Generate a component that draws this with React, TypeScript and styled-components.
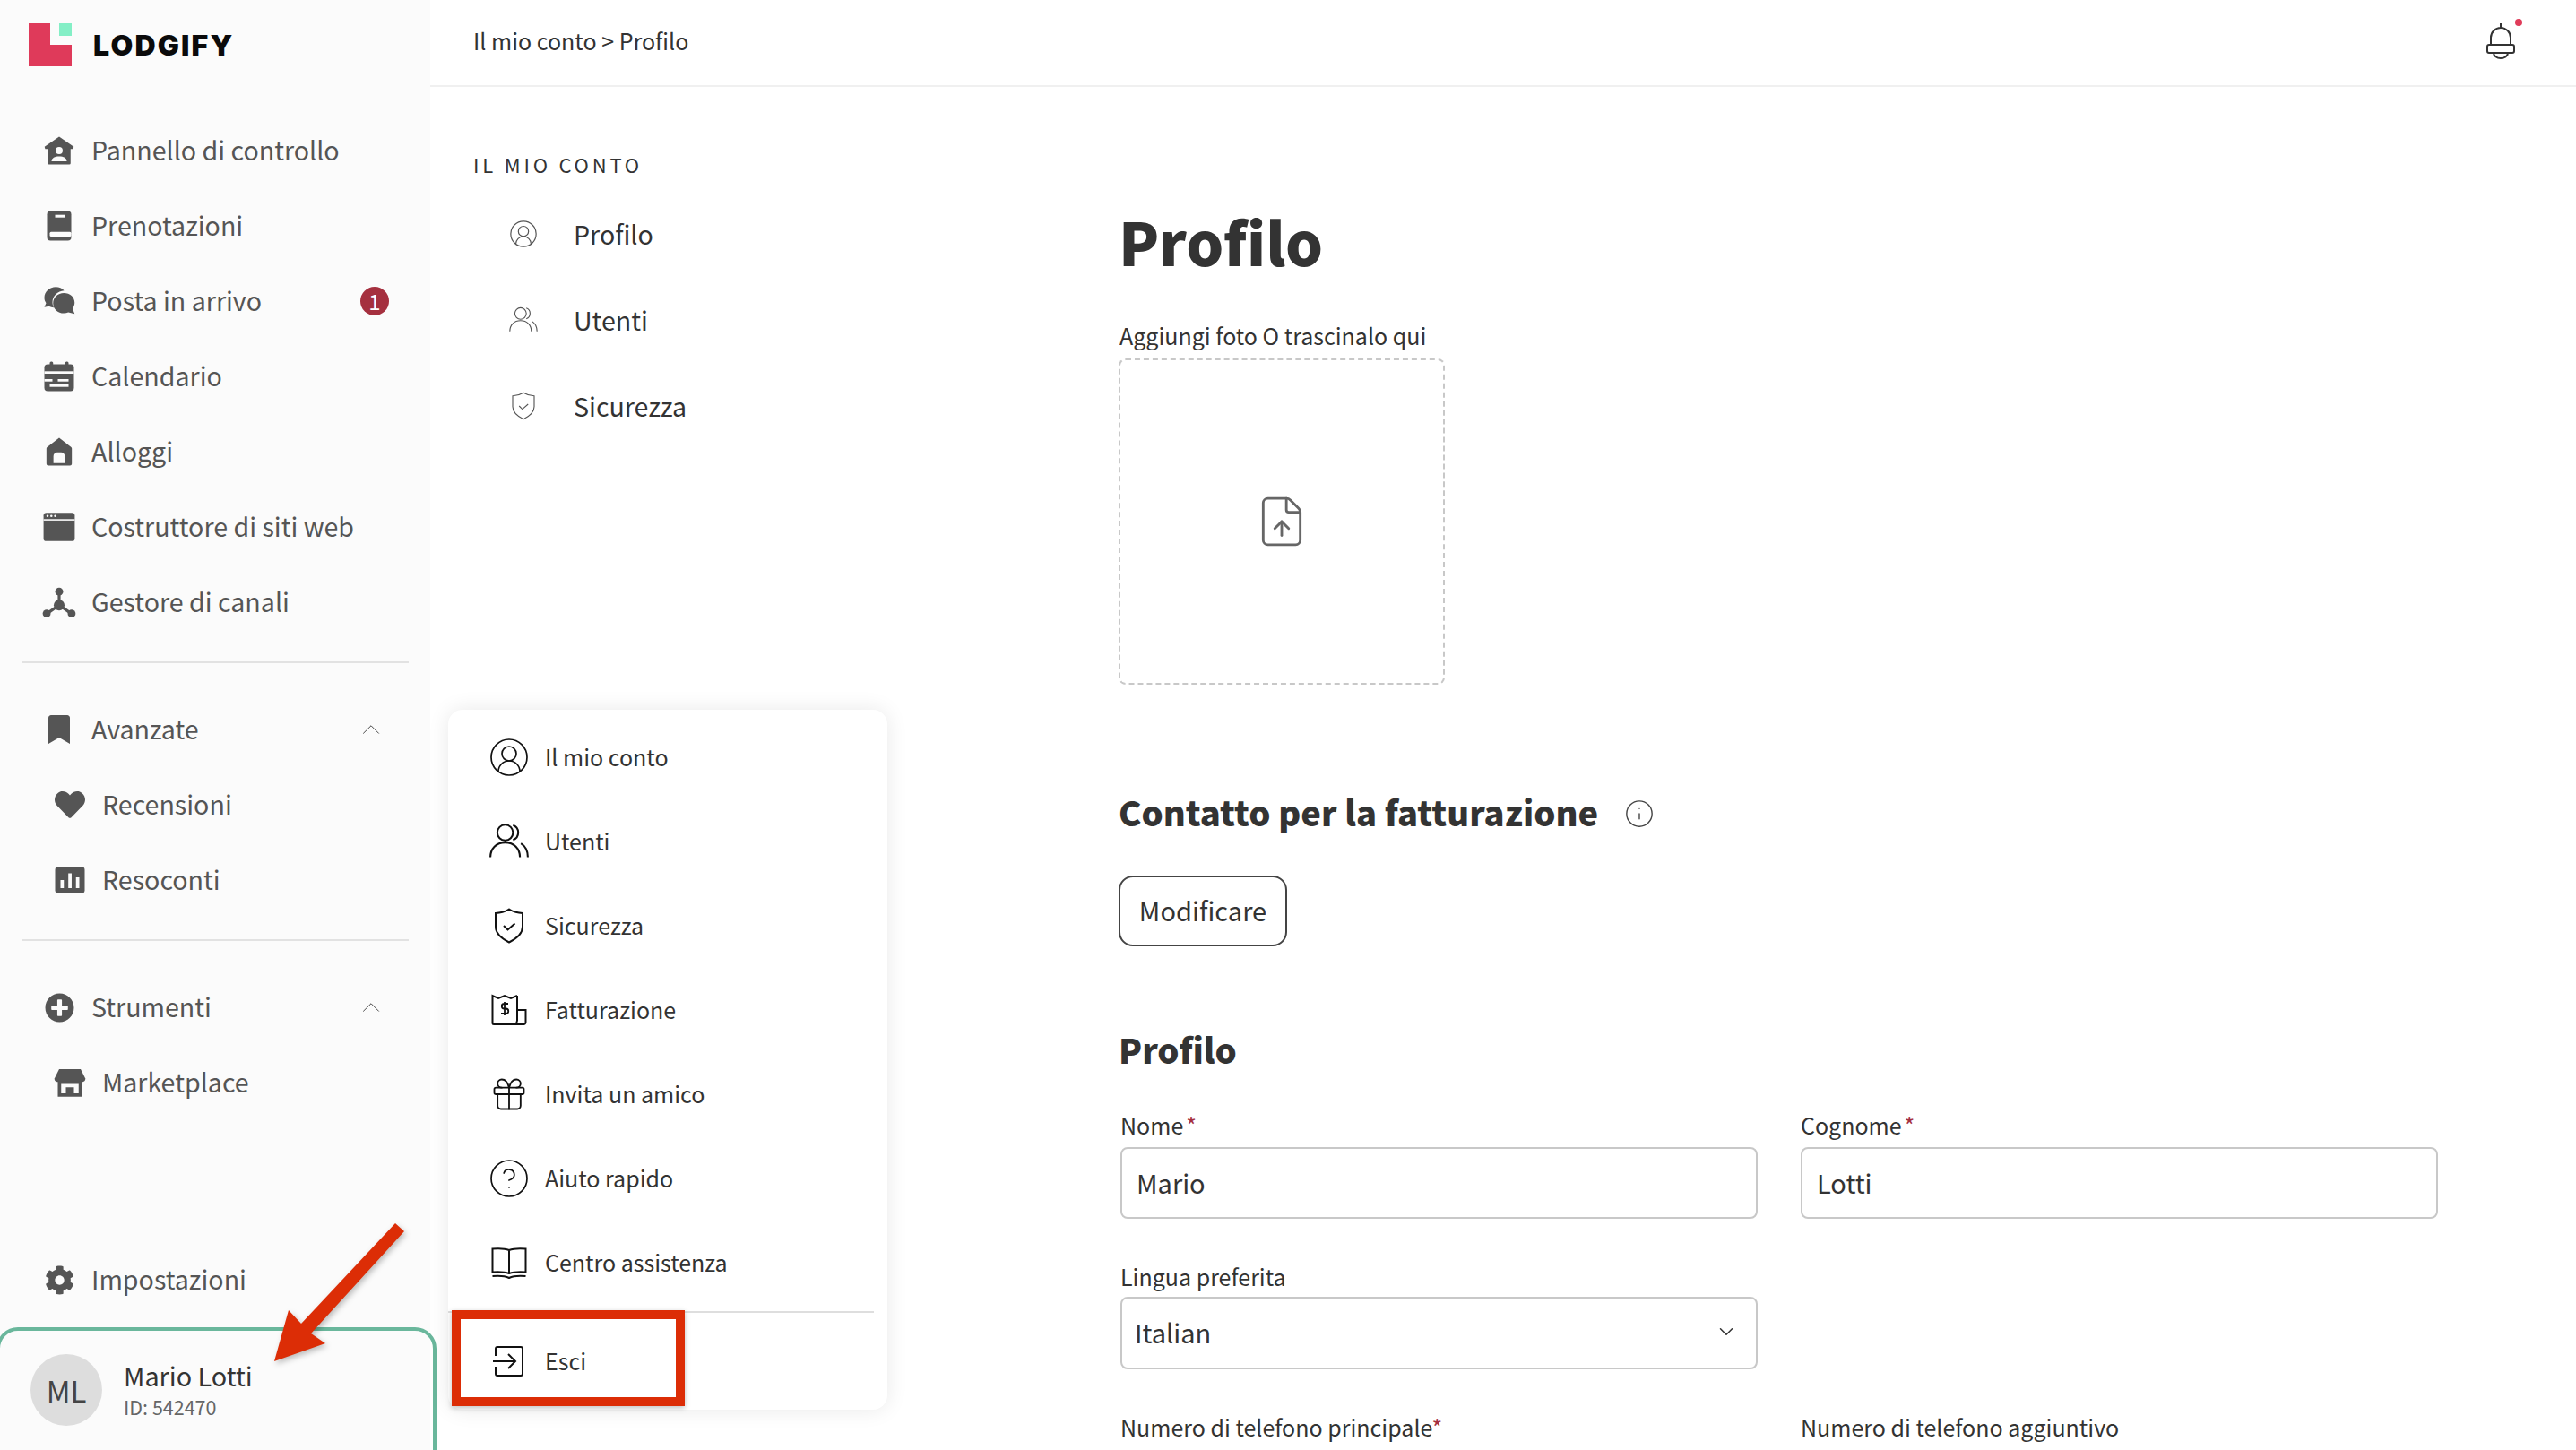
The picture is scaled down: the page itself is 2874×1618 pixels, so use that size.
import React from "react";
import styled, { createGlobalStyle } from "styled-components";
import { FaBookmark, FaCog, FaHeart, FaPlusCircle } from "react-icons/fa";
import {
  ChevronDown,
  ChevronUp,
  CircleHelp,
  CircleUserRound,
  FileUp,
  Gift,
  Info,
} from "lucide-react";

const GlobalStyle = createGlobalStyle`
  html, body {
    margin: 0;
    background: #fff;
    font-family: "Noto Sans CJK SC", "Noto Sans", sans-serif;
    color: #333;
  }
  * {
    box-sizing: border-box;
  }
  svg {
    flex-shrink: 0;
  }
`;

const SPage = styled.div`
  position: relative;
  display: flex;
  height: 1618px;
  overflow: hidden;
`;

const SSidebar = styled.aside`
  display: flex;
  flex-direction: column;
  flex: 0 0 480px;
  height: 100%;
  background: #fbfbfb;
`;

const SBrand = styled.div`
  display: flex;
  align-items: center;
  gap: 24px;
  height: 96px;
  padding: 4px 0 0 32px;
  margin-bottom: 30px;
`;

const SLogoText = styled.span`
  font-family: Inter, sans-serif;
  font-weight: 900;
  font-size: 32px;
  letter-spacing: 2.2px;
  color: #0b0b0b;
`;

const SNavRow = styled.div<{ $sub?: boolean }>`
  display: flex;
  align-items: center;
  flex: 0 0 84px;
  height: 84px;
  padding-left: ${(p) => (p.$sub ? "60px" : "48px")};
  padding-right: 46px;
  gap: 18px;
  font-size: 28.6px;
  color: #555;
`;

const SNavIcon = styled.span`
  display: flex;
  align-items: center;
  justify-content: center;
  flex: 0 0 36px;
  width: 36px;
  height: 36px;
  color: #555;
`;

const SNavLabel = styled.span`
  flex: 1;
  padding-bottom: 3px;
`;

const SBadge = styled.span`
  display: flex;
  align-items: center;
  justify-content: center;
  width: 32px;
  height: 32px;
  border-radius: 50%;
  background: #a5303f;
  color: #fff;
  font-size: 24px;
  line-height: 1;
`;

const SChevron = styled.span`
  display: flex;
  margin-right: 3px;
  color: #444;
`;

const SDivider = styled.hr`
  flex: 0 0 2px;
  width: 432px;
  margin: 24px 0 32px 24px;
  border: 0;
  background: #e2e2e2;
`;

const SSidebarFoot = styled.div`
  margin-top: auto;
`;

const SUserCard = styled.div`
  display: flex;
  align-items: center;
  gap: 24px;
  height: 148px;
  padding: 14px 0 0 34px;
`;

const SAvatar = styled.div`
  display: flex;
  align-items: center;
  justify-content: center;
  flex: 0 0 80px;
  height: 80px;
  border-radius: 50%;
  background: #ddd;
  font-size: 33px;
  color: #444;
`;

const SUserName = styled.div`
  font-size: 28.8px;
  line-height: 36px;
  color: #333;
`;

const SUserId = styled.div`
  margin-top: 1px;
  font-size: 21.5px;
  line-height: 32px;
  color: #666;
`;

const SUserHighlight = styled.div`
  position: absolute;
  left: -4px;
  top: 1481px;
  width: 491px;
  height: 160px;
  border: 4px solid #6ab79c;
  border-radius: 24px;
`;

const SMain = styled.div`
  display: flex;
  flex-direction: column;
  flex: 1;
  min-width: 0;
`;

const STopBar = styled.header`
  display: flex;
  align-items: center;
  justify-content: space-between;
  flex: 0 0 97px;
  padding: 0 48px 6px;
  border-bottom: 2px solid #f0f0f0;
  font-size: 25px;
`;

const SBell = styled.div`
  position: relative;
  display: flex;
  margin: 2px 20px 0 0;
`;

const SBellDot = styled.span`
  position: absolute;
  top: -5px;
  right: -8px;
  width: 8px;
  height: 8px;
  border-radius: 50%;
  background: #e03c5a;
`;

const SBody = styled.div`
  display: flex;
  flex: 1;
`;

const SSubNav = styled.nav`
  flex: 0 0 769px;
  padding: 73px 0 0 48px;
`;

const SSubNavTitle = styled.div`
  height: 28px;
  margin-bottom: 15px;
  font-size: 22px;
  line-height: 26px;
  letter-spacing: 3.8px;
`;

const SSubNavRow = styled.div`
  display: flex;
  align-items: center;
  gap: 40px;
  height: 96px;
  padding-left: 40px;
  font-size: 28.6px;
  color: #333;
`;

const SSubNavIcon = styled.span`
  display: flex;
  align-items: center;
  justify-content: center;
  flex: 0 0 32px;
  min-width: 0;
  height: 32px;
  color: #555;
`;

const SSubNavLabel = styled.span`
  padding-bottom: 2px;
`;

const SContent = styled.main`
  flex: 1;
  padding-top: 129px;
`;

const SPageTitle = styled.h1`
  height: 90px;
  margin: 0 0 42px -1px;
  font-size: 66px;
  line-height: 85px;
  font-weight: 900;
`;

const SFieldLabel = styled.label<{ $low?: boolean }>`
  display: block;
  height: 36px;
  margin-top: ${(p) => (p.$low ? "2px" : "0")};
  font-size: 25px;
  line-height: 33px;
`;

const SRequired = styled.span<{ $tight?: boolean }>`
  margin-left: ${(p) => (p.$tight ? "0" : "3px")};
  color: #a5303f;
`;

const SDropZone = styled.div`
  display: flex;
  align-items: center;
  justify-content: center;
  width: 364px;
  height: 364px;
  margin: 6px 0 116px -1px;
  border: 2px dashed #c8c8c8;
  border-radius: 8px;
  color: #666;
`;

const SSectionHead = styled.div`
  display: flex;
  align-items: center;
  gap: 29px;
  height: 56px;
`;

const SSectionTitle = styled.h2`
  height: 56px;
  margin: 0 0 0 -1px;
  font-size: 38.1px;
  line-height: 52px;
  font-weight: 900;
`;

const SOutlineButton = styled.button`
  display: block;
  width: 188px;
  height: 79px;
  margin: 41px 0 89px -1px;
  padding: 0 0 3px;
  border: 2px solid #444;
  border-radius: 16px;
  background: #fff;
  font: inherit;
  font-size: 29px;
  color: #333;
`;

const SFormGrid = styled.div`
  display: grid;
  grid-template-columns: 711px 711px;
  column-gap: 48px;
  row-gap: 46px;
  margin: 38px 0 0 1px;
`;

const SFieldBox = styled.div<{ $select?: boolean }>`
  display: flex;
  align-items: center;
  justify-content: space-between;
  height: ${(p) => (p.$select ? "81px" : "80px")};
  margin-top: ${(p) => (p.$select ? "3px" : "5px")};
  padding: 0 20px 3px ${(p) => (p.$select ? "14px" : "16px")};
  border: 2px solid #c8c8c8;
  border-radius: 8px;
  font-size: 29px;
  color: #333;
`;

const SEmptyCell = styled.div``;

const SPopup = styled.div`
  position: absolute;
  left: 500px;
  top: 792px;
  width: 490px;
  height: 781px;
  padding-top: 6px;
  border-radius: 16px;
  background: #fff;
  box-shadow: 0 0 24px rgba(0, 0, 0, 0.09);
`;

const SPopupRow = styled.div`
  display: flex;
  align-items: center;
  gap: 20px;
  height: 94px;
  padding-left: 48px;
  font-size: 25px;
  color: #333;
`;

const SPopupIcon = styled.span`
  display: flex;
  align-items: center;
  justify-content: center;
  flex: 0 0 40px;
  min-width: 0;
  height: 40px;
  color: #111;
`;

const SPopupLabel = styled.span`
  padding-bottom: 2px;
`;

const SPopupDivider = styled.hr`
  height: 2px;
  margin: 7px 15px 7px 0;
  border: 0;
  background: #dedede;
`;

const SRedFrame = styled.div`
  position: absolute;
  left: 4px;
  top: 670px;
  width: 260px;
  height: 107px;
  border: 10px solid #dc2d06;
  box-shadow: 0 2px 6px rgba(0, 0, 0, 0.25);
`;

const SArrow = styled.svg`
  position: absolute;
  left: 0;
  top: 1340px;
  filter: drop-shadow(2px 3px 3px rgba(0, 0, 0, 0.25));
`;

const LogoMark = () => (
  <svg width="48" height="48" viewBox="0 0 48 48">
    <path d="M0 0H24V24H48V48H0Z" fill="#df3a5a" />
    <rect x="34" y="0" width="14" height="14" fill="#84efc6" />
  </svg>
);

const iconProps = {
  width: 34,
  height: 34,
  viewBox: "0 0 24 24",
  fill: "currentColor",
};
const BG = "#fbfbfb";

const HomeIcon = () => (
  <svg {...iconProps}>
    <path d="M12 1 23.500 9 23 10.800H21V22a1 1 0 0 1-1 1H4a1 1 0 0 1-1-1V10.800H1L.5 9Z" />
    <circle cx="12" cy="12" r="2.800" fill={BG} />
    <path d="M6 20.500c0-2.800 2.600-4 6-4s6 1.200 6 4Z" fill={BG} />
  </svg>
);

const BookIcon = () => (
  <svg {...iconProps} width="36" height="36">
    <rect x="3" y="1" width="18" height="22" rx="2.500" />
    <rect x="9" y="3.800" width="7" height="2" fill={BG} />
    <rect x="5" y="16.500" width="16" height="3.500" rx="1" fill={BG} />
  </svg>
);

const ChatIcon = () => (
  <svg {...iconProps} width="36" height="36">
    <path d="M1 9.500C1 5 4.800 1.500 9.500 1.500c2.500 0 4.700 1 6.200 2.600-4.800.3-8.700 4-8.700 8.700 0 1.500.4 2.900 1.100 4.100-1.400-.1-2.600-.4-3.700-1L1 16.500l1.300-3C1.500 12.300 1 11 1 9.500Z" />
    <path d="M15.500 6C20 6 23.500 9 23.500 13.200c0 1.700-.6 3.200-1.500 4.400l1.500 3.900-4.700-1.200c-1 .4-2.100.7-3.300.7-4.500 0-8-3.200-8-7.400S11 6 15.500 6Z" />
  </svg>
);

const CalendarIcon = () => (
  <svg {...iconProps} width="36" height="36">
    <rect x="1" y="3" width="22" height="20" rx="2.500" />
    <rect x="5" y="1" width="2.500" height="4" rx="1" />
    <rect x="16.500" y="1" width="2.500" height="4" rx="1" />
    <rect x="1" y="8.200" width="22" height="1.800" fill={BG} />
    <rect x="1" y="14" width="6" height="1.800" fill={BG} />
    <rect x="11" y="14" width="8" height="1.800" fill={BG} />
    <rect x="5" y="18" width="14" height="1.800" fill={BG} />
  </svg>
);

const HouseIcon = () => (
  <svg {...iconProps}>
    <path d="M12 1 21.500 8.500a1.500 1.500 0 0 1 .5 1.200V21.500a1.500 1.500 0 0 1-1.500 1.500h-17A1.500 1.500 0 0 1 2 21.500V9.700a1.500 1.500 0 0 1 .5-1.200Z" />
    <path d="M7.500 21V15.500a3 3 0 0 1 3-3h3a3 3 0 0 1 3 3V21Z" fill={BG} />
  </svg>
);

const BrowserIcon = () => (
  <svg {...iconProps} width="38" height="38">
    <rect x="1" y="2" width="22" height="20" rx="2" />
    <rect x="1" y="6.500" width="22" height="1" fill={BG} />
    <circle cx="3.800" cy="4.300" r=".8" fill={BG} />
    <circle cx="6.500" cy="4.300" r=".8" fill={BG} />
    <circle cx="9.200" cy="4.300" r=".8" fill={BG} />
  </svg>
);

const NetworkIcon = () => (
  <svg {...iconProps} width="38" height="38">
    <path d="M12 5v8M3.500 20 12 14l8.500 6" stroke="currentColor" strokeWidth="2" fill="none" />
    <circle cx="12" cy="4.500" r="2.800" />
    <circle cx="12" cy="14" r="3.800" />
    <circle cx="3.200" cy="20" r="2.800" />
    <circle cx="20.800" cy="20" r="2.800" />
  </svg>
);

const ChartIcon = () => (
  <svg {...iconProps} width="36" height="36">
    <rect x="1" y="2" width="22" height="20" rx="2.500" />
    <rect x="5" y="12" width="2.500" height="6" fill={BG} />
    <rect x="10.800" y="7" width="2.500" height="11" fill={BG} />
    <rect x="16.500" y="10" width="2.500" height="8" fill={BG} />
  </svg>
);

const StoreIcon = () => (
  <svg {...iconProps} width="36" height="36">
    <path d="M4 2h16l3.500 7a2.500 2.500 0 0 1-2 2.500H2.500A2.500 2.500 0 0 1 .500 9Z" />
    <path d="M3 11h18v11.500H3ZM5.500 13v7h3.500v-4.500h6V20h3.500v-7Z" fillRule="evenodd" />
  </svg>
);

const UsersLine = ({ size, width }: { size: number; width: number }) => (
  <svg width={size} height={size} viewBox="0 0 40 40" fill="none" stroke="currentColor" strokeWidth={width}>
    <ellipse cx="16" cy="11" rx="8" ry="8" />
    <path d="M1 36c0-9 6-15 15-15s15 6 15 15" />
    <path d="M24 3.500a8 8 0 0 1 0 15M32 22c4 2.500 7 7.500 7 14" />
  </svg>
);

const ShieldLine = ({ size, width }: { size: number; width: number }) => (
  <svg width={size} height={size} viewBox="0 0 40 40" fill="none" stroke="currentColor" strokeWidth={width}>
    <path d="M20 1.500C24 4 29 5.500 35 6v15C35 29.500 27 35 20 38.500 13 35 5 29.500 5 21V6c6-.5 11-2 15-4.500Z" />
    <path d="m14 20 4.500 4.500 8-7" />
  </svg>
);

const ReceiptIcon = () => (
  <svg width="40" height="40" viewBox="0 0 40 40" fill="none" stroke="currentColor" strokeWidth="2">
    <path d="M29 4v28a2.500 2.500 0 0 0 2.500 4h5a2.500 2.500 0 0 0 2-3V20H29" />
    <path d="M31.500 36H3a1.500 1.500 0 0 1-1.500-1.500V4L8 7l7-3 7 3 7-3" />
    <path d="M19 13h-4.500a2.500 2.500 0 0 0 0 5.500h2a2.500 2.500 0 0 1 0 5.500H11M15 11v15" strokeWidth="1.800" />
  </svg>
);

const OpenBookIcon = () => (
  <svg width="40" height="40" viewBox="0 0 40 40" fill="none" stroke="currentColor" strokeWidth="2">
    <path d="M20 32V6c-4-1.600-12-2-18.500-1.500v26c6.500-.4 14.500 0 18.500 1.500 4-1.500 12-1.900 18.500-1.500v-26C32 4 24 4.400 20 6" />
    <path d="M1.500 35c7-.6 14.500 0 18.500 2 4-2 11.500-2.600 18.500-2" />
  </svg>
);

const ExitIcon = () => (
  <svg width="40" height="40" viewBox="0 0 40 40" fill="none" stroke="currentColor" strokeWidth="2">
    <path d="M5 14V6a2 2 0 0 1 2-2h26a2 2 0 0 1 2 2v28a2 2 0 0 1-2 2H7a2 2 0 0 1-2-2v-8" />
    <path d="M2 20h24M19 12l8 8-8 8" />
  </svg>
);

const BellIcon = () => (
  <svg width="32" height="40" viewBox="0 0 32 40" fill="none" stroke="#333" strokeWidth="2">
    <path d="M16 0v5M5 24V16a11 11 0 0 1 22 0v8" />
    <rect x="1" y="24" width="30" height="9" rx="2" />
    <path d="M8 33a8 6 0 0 0 16 0" />
  </svg>
);

type NavItem = { icon: React.ReactNode; label: string; badge?: number; chevron?: boolean; sub?: boolean };

const mainNav: NavItem[] = [
  { icon: <HomeIcon />, label: "Pannello di controllo" },
  { icon: <BookIcon />, label: "Prenotazioni" },
  { icon: <ChatIcon />, label: "Posta in arrivo", badge: 1 },
  { icon: <CalendarIcon />, label: "Calendario" },
  { icon: <HouseIcon />, label: "Alloggi" },
  { icon: <BrowserIcon />, label: "Costruttore di siti web" },
  { icon: <NetworkIcon />, label: "Gestore di canali" },
];

const advancedNav: NavItem[] = [
  { icon: <FaBookmark size={32} />, label: "Avanzate", chevron: true },
  { icon: <FaHeart size={34} />, label: "Recensioni", sub: true },
  { icon: <ChartIcon />, label: "Resoconti", sub: true },
];

const toolsNav: NavItem[] = [
  { icon: <FaPlusCircle size={33} />, label: "Strumenti", chevron: true },
  { icon: <StoreIcon />, label: "Marketplace", sub: true },
];

const popupItems = [
  { icon: <CircleUserRound size={48} strokeWidth={0.85} />, label: "Il mio conto" },
  { icon: <UsersLine size={44} width={1.9} />, label: "Utenti" },
  { icon: <ShieldLine size={40} width={2} />, label: "Sicurezza" },
  { icon: <ReceiptIcon />, label: "Fatturazione" },
  { icon: <Gift size={44} strokeWidth={1} />, label: "Invita un amico" },
  { icon: <CircleHelp size={48} strokeWidth={0.85} />, label: "Aiuto rapido" },
  { icon: <OpenBookIcon />, label: "Centro assistenza" },
];

const subNavItems = [
  { icon: <CircleUserRound size={34} strokeWidth={0.85} />, label: "Profilo" },
  { icon: <UsersLine size={32} width={1.4} />, label: "Utenti" },
  { icon: <ShieldLine size={32} width={1.4} />, label: "Sicurezza" },
];

const NavRow = ({ item }: { item: NavItem }) => (
  <SNavRow $sub={item.sub}>
    <SNavIcon>{item.icon}</SNavIcon>
    <SNavLabel>{item.label}</SNavLabel>
    {item.badge ? <SBadge>{item.badge}</SBadge> : null}
    {item.chevron ? (
      <SChevron>
        <ChevronUp size={34} strokeWidth={0.7} />
      </SChevron>
    ) : null}
  </SNavRow>
);

export default function App() {
  return (
    <SPage>
      <GlobalStyle />
      <SSidebar>
        <SBrand>
          <LogoMark />
          <SLogoText>LODGIFY</SLogoText>
        </SBrand>
        {mainNav.map((item) => (
          <NavRow key={item.label} item={item} />
        ))}
        <SDivider />
        {advancedNav.map((item) => (
          <NavRow key={item.label} item={item} />
        ))}
        <SDivider />
        {toolsNav.map((item) => (
          <NavRow key={item.label} item={item} />
        ))}
        <SSidebarFoot>
          <NavRow item={{ icon: <FaCog size={33} />, label: "Impostazioni" }} />
          <SUserCard>
            <SAvatar>ML</SAvatar>
            <div>
              <SUserName>Mario Lotti</SUserName>
              <SUserId>ID: 542470</SUserId>
            </div>
          </SUserCard>
        </SSidebarFoot>
      </SSidebar>

      <SMain>
        <STopBar>
          <span>Il mio conto &gt; Profilo</span>
          <SBell>
            <BellIcon />
            <SBellDot />
          </SBell>
        </STopBar>
        <SBody>
          <SSubNav>
            <SSubNavTitle>IL MIO CONTO</SSubNavTitle>
            {subNavItems.map((item) => (
              <SSubNavRow key={item.label}>
                <SSubNavIcon>{item.icon}</SSubNavIcon>
                <SSubNavLabel>{item.label}</SSubNavLabel>
              </SSubNavRow>
            ))}
          </SSubNav>
          <SContent>
            <SPageTitle>Profilo</SPageTitle>
            <SFieldLabel>Aggiungi foto O trascinalo qui</SFieldLabel>
            <SDropZone>
              <FileUp size={62} strokeWidth={1.1} />
            </SDropZone>
            <SSectionHead>
              <SSectionTitle>Contatto per la fatturazione</SSectionTitle>
              <Info size={34} strokeWidth={1} color="#444" />
            </SSectionHead>
            <SOutlineButton>Modificare</SOutlineButton>
            <SSectionTitle>Profilo</SSectionTitle>
            <SFormGrid>
              <div>
                <SFieldLabel>
                  Nome<SRequired>*</SRequired>
                </SFieldLabel>
                <SFieldBox>Mario</SFieldBox>
              </div>
              <div>
                <SFieldLabel>
                  Cognome<SRequired>*</SRequired>
                </SFieldLabel>
                <SFieldBox>Lotti</SFieldBox>
              </div>
              <div>
                <SFieldLabel $low>Lingua preferita</SFieldLabel>
                <SFieldBox $select>
                  Italian
                  <ChevronDown size={26} strokeWidth={1.4} color="#333" />
                </SFieldBox>
              </div>
              <SEmptyCell />
              <SFieldLabel $low>
                Numero di telefono principale<SRequired $tight>*</SRequired>
              </SFieldLabel>
              <SFieldLabel $low>Numero di telefono aggiuntivo</SFieldLabel>
            </SFormGrid>
          </SContent>
        </SBody>
      </SMain>

      <SUserHighlight />

      <SPopup>
        {popupItems.map((item) => (
          <SPopupRow key={item.label}>
            <SPopupIcon>{item.icon}</SPopupIcon>
            <SPopupLabel>{item.label}</SPopupLabel>
          </SPopupRow>
        ))}
        <SPopupDivider />
        <SPopupRow>
          <SPopupIcon>
            <ExitIcon />
          </SPopupIcon>
          <SPopupLabel>Esci</SPopupLabel>
        </SPopupRow>
        <SRedFrame />
      </SPopup>

      <SArrow width="480" height="200" viewBox="0 1340 480 200">
        <path
          d="M306 1519 322 1462 336 1477 441 1365 451 1374 347 1488 363 1499Z"
          fill="#dc2d06"
        />
      </SArrow>
    </SPage>
  );
}
